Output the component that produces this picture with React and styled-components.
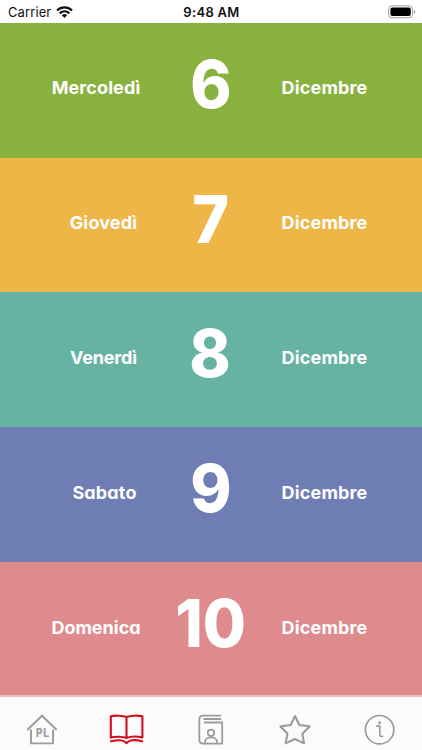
import React from "react";
import styled, { createGlobalStyle } from "styled-components";

const GlobalStyle = createGlobalStyle`
  html, body { margin: 0; padding: 0; }
  body { overflow: hidden; background: #fff; font-family: Inter, "Open Sans", sans-serif; }
`;

const Screen = styled.div`
  display: flex;
  flex-direction: column;
  width: 422px;
  height: 750px;
  overflow: hidden;
`;

const StatusBar = styled.header`
  display: grid;
  grid-template-columns: 1fr auto 1fr;
  align-items: center;
  flex: none;
  box-sizing: border-box;
  height: 22.7px;
  padding: 2px 7px 0 8px;
  background: #fff;
  color: #111;
  line-height: 16px;
`;

const Carrier = styled.div`
  display: flex;
  align-items: center;
  gap: 5px;
  font-size: 13px;
  letter-spacing: 0.1px;
`;

const Clock = styled.div`
  font-size: 13px;
  font-weight: 600;
  letter-spacing: 0.3px;
`;

const Battery = styled.div`
  display: flex;
  justify-content: flex-end;
  margin-right: -1px;
`;

const Days = styled.main`
  flex: 1;
  min-height: 0;
  overflow: hidden;
`;

const DayRow = styled.section`
  display: grid;
  grid-template-columns: 192px 37px 191px;
  justify-items: center;
  height: 134.9px;
  background: ${(p) => p.$color};
  color: #fff;
`;

const Label = styled.span`
  margin-top: 53.5px;
  margin-left: ${(p) => p.$shift || 0}px;
  font-size: 18px;
  font-weight: 700;
  line-height: 24px;
  letter-spacing: ${(p) => p.$tracking || 0}px;
  font-feature-settings: "cv11";
  white-space: nowrap;
`;

const DayNumber = styled.strong`
  margin-top: 21px;
  font-size: 66.5px;
  font-weight: 800;
  line-height: 80px;
  white-space: nowrap;
  transform: scaleX(0.94);
`;

const TabBar = styled.nav`
  display: grid;
  grid-template-columns: repeat(5, 1fr);
  flex: none;
  box-sizing: border-box;
  height: 55px;
  border-top: 2px solid #e9bfc2;
  background: #fbfbfb;
`;

const Tab = styled.a`
  display: flex;
  justify-content: center;
  padding-top: 16px;
  color: ${(p) => (p.$active ? "#d00f22" : "#9c9c9c")};
  svg { display: block; flex: none; }
`;

const days = [
  { name: "Mercoledì", number: 6, color: "#88b13e", tracking: 0.1, shift: 0 },
  { name: "Giovedì", number: 7, color: "#edb647", tracking: 0.15, shift: 15 },
  { name: "Venerdì", number: 8, color: "#66b3a3", tracking: -0.15, shift: 15 },
  { name: "Sabato", number: 9, color: "#6f7db5", tracking: 0.15, shift: 17 },
  { name: "Domenica", number: 10, color: "#df8a8d", tracking: 0, shift: 0 },
];

const WifiIcon = () => (
  <svg width="17" height="13" viewBox="0 0 17 13" fill="none" stroke="#111" strokeWidth="2.3">
    <path d="M1 4.5C5.2.3 11.8.3 16 4.5M3.7 7.3c2.8-2.6 6.8-2.6 9.6 0" />
    <path d="M5.8 9.2a4 4 0 0 1 5.4 0L8.5 12z" fill="#111" stroke="none" />
  </svg>
);

const BatteryIcon = () => (
  <svg width="28" height="14" viewBox="0 0 28 14">
    <rect x=".6" y=".8" width="24" height="12" rx="3.6" fill="none" stroke="#9b9b9b" />
    <rect x="2.4" y="2.6" width="20.4" height="8.4" rx="2" fill="#000" />
    <path d="M26 4.7c1.8.8 1.8 3.4 0 4.2z" fill="#9b9b9b" />
  </svg>
);

const HomeIcon = () => (
  <svg width="32" height="33" viewBox="0 0 32 33" fill="none" stroke="currentColor" strokeWidth="1.9">
    <path d="M1.3 17 16 2.7 30.7 17M5 16.5V30.4H27V16.5" />
    <text x="16.3" y="24" textAnchor="middle" fill="currentColor" stroke="none" fontFamily="Open Sans" fontSize="11.5" fontWeight="700">PL</text>
  </svg>
);

const BookIcon = () => (
  <svg width="36" height="33" viewBox="0 0 36 33" fill="none" stroke="currentColor" strokeWidth="2.1" strokeLinejoin="round" strokeLinecap="round">
    <path d="M17.5 4C14 2.5 6.3 2.2 1.8 3.3V24.6C6.3 23.4 13.6 23.4 17.5 25C21.6 23.4 28.9 23.4 33.4 24.6V3.3C28.9 2.2 21.2 2.5 17.5 4V25" />
    <path d="M2 28.2C7.5 27 13.5 27 15.6 28.5L17.5 30.2L19.5 28.5C21.6 27 27.7 27 33.2 28.2" />
  </svg>
);

const AlbumIcon = () => (
  <svg width="26" height="33" viewBox="0 0 26 33" fill="none" stroke="currentColor" strokeWidth="1.8">
    <path d="M23.2 2.6H5.3C2.8 2.6 1.3 4.2 1.3 6.5V26.8C1.3 29.3 2.9 30.6 5.3 30.6H24.2V9.5H5.8M5.5 6H23.2" />
    <circle cx="13" cy="19.8" r="3.2" />
    <path d="M7 30.3V28.7C7 22.9 19 22.9 19 28.7V30.3" />
  </svg>
);

const StarIcon = () => (
  <svg width="34" height="33" viewBox="0 0 34 33" fill="none" stroke="currentColor" strokeWidth="2.1" strokeLinejoin="round">
    <path d="M17 3 21.3 12 31.6 13.4 24.4 20.8 26 30.4 17 26 7.6 30.4 9.4 20.6 2.4 13.4 12.7 12z" />
  </svg>
);

const InfoIcon = () => (
  <svg width="32" height="33" viewBox="0 0 32 33" fill="none" stroke="currentColor" strokeWidth="1.7">
    <circle cx="15.6" cy="16.7" r="14.2" />
    <path d="M12.2 13.2H15.8V22c0 1.3 1 1.7 3.5 1.4" />
    <circle cx="15.6" cy="9.7" r="1.5" fill="currentColor" stroke="none" />
  </svg>
);

const tabs = [HomeIcon, BookIcon, AlbumIcon, StarIcon, InfoIcon];

export default function App() {
  return (
    <Screen>
      <GlobalStyle />
      <StatusBar>
        <Carrier>Carrier <WifiIcon /></Carrier>
        <Clock>9:48 AM</Clock>
        <Battery><BatteryIcon /></Battery>
      </StatusBar>
      <Days>
        {days.map((day) => (
          <DayRow key={day.number} $color={day.color}>
            <Label $shift={day.shift} $tracking={day.tracking}>{day.name}</Label>
            <DayNumber>{day.number}</DayNumber>
            <Label $tracking={0.15}>Dicembre</Label>
          </DayRow>
        ))}
      </Days>
      <TabBar>
        {tabs.map((Icon, i) => (
          <Tab key={i} $active={i === 1}><Icon /></Tab>
        ))}
      </TabBar>
    </Screen>
  );
}
